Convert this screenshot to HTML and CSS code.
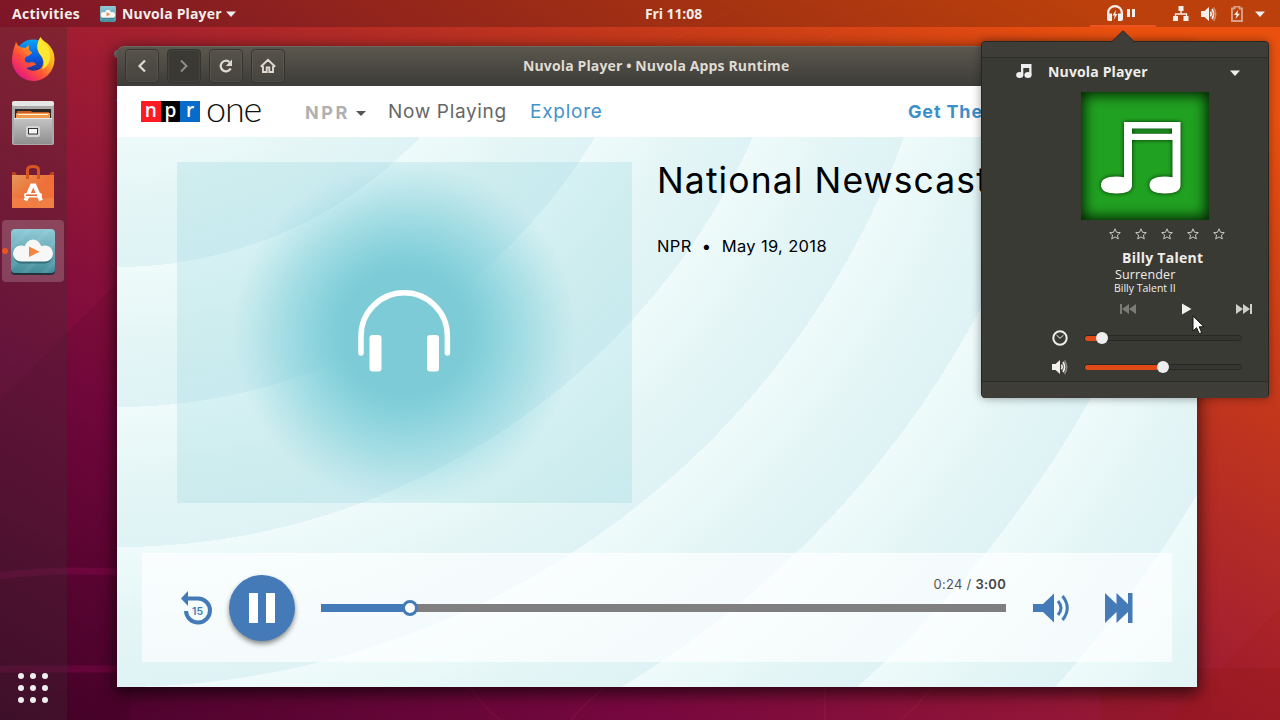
FILE: index.html
```html
<!DOCTYPE html>
<html lang="en">
<head>
<meta charset="utf-8">
<title>Nuvola Player</title>
<link rel="stylesheet" href="styles.css">
</head>
<body>
<div class="desktop">
  <svg class="wallpaper" width="1280" height="720" viewBox="0 0 1280 720">
    <path d="M0 400 130 270V720H0z" fill="#000" opacity=".06"/>
    <path d="M0 576Q66 566 180 576" fill="none" stroke="#c0106c" stroke-width="7" opacity=".2"/>
    <path d="M0 669H180" stroke="#c0106c" stroke-width="7" opacity=".2"/>
    <path d="M1100 668H1280V720H1100z" fill="#8a1000" opacity=".16"/>
    <path d="M1280 608 1168 720H1280z" fill="#a01000" opacity=".1"/>
    <g fill="none" stroke="#ff5a50" opacity=".08" stroke-width="2">
      <path d="M470 687q12 18 30 33M605 687q-22 18-34 33M825 687v33M932 687q-14 20-40 40M780 46Q840 8 910 0M660 46Q720 18 750 0M815 46Q860 8 1000 34"/>
    </g>
  </svg>

  <header class="topbar">
    <span class="activities">Activities</span>
    <svg class="app-icon" width="16" height="16" viewBox="0 0 44 44"><use href="#nuvola"/></svg>
    <span class="app-name">Nuvola Player</span>
    <svg class="app-caret" width="10" height="6"><path d="M0 .5h10L5 6z" fill="#eee"/></svg>
    <span class="clock">Fri 11:08</span>
    <div class="indicator">
      <svg width="30" height="18" viewBox="0 0 30 18" fill="#f3efec">
        <path d="M1.200 9.500V7.500a6.700 6.200 0 0 1 13.600 0v2" fill="none" stroke="#f3efec" stroke-width="2.200"/>
        <path d="M0 8.500h5V16H2q-2 0-2-2zM16 8.500h-5V16h3q2 0 2-2z"/>
        <path d="M9 5 5.500 10.500h2.300L6.500 15l4-6H8.300z"/>
        <path d="M20 4h3v8h-3zM25 4h3v8h-3z"/>
      </svg>
    </div>
    <svg class="net" width="16" height="16" viewBox="0 0 16 16" fill="#f3efec"><path d="M5.500 0h5v5h-5zM0 10h5v5H0zM10.500 10h5v5h-5z"/><path d="M8 5v3M2.500 11V8h11v3" fill="none" stroke="#f3efec" stroke-width="1.300"/></svg>
    <svg class="vol" width="16" height="16" viewBox="0 0 16 16"><use href="#speaker"/></svg>
    <svg class="bat" width="12" height="16" viewBox="0 0 12 16"><path d="M1 2.500h2.500v-2h5v2H11v12.500H1z" fill="none" stroke="#fff" stroke-opacity=".5" stroke-width="1.900"/><path d="M7 4 3 9h2.600L4.500 13l4.500-5.200H6.500z" fill="#f3efec"/></svg>
    <svg class="sys-caret" width="10" height="6"><path d="M0 .5h10L5 6z" fill="#eee"/></svg>
  </header>

  <nav class="dock">
    <div class="dock-item">
      <svg width="44" height="46" viewBox="0 0 44 46">
        <defs>
          <linearGradient id="fx" x1=".9" y1="0" x2=".1" y2=".9"><stop offset="0" stop-color="#ffe226"/><stop offset=".35" stop-color="#ffb01e"/><stop offset=".65" stop-color="#ff5038"/><stop offset="1" stop-color="#e0128c"/></linearGradient>
          <linearGradient id="fxb" x1="0" y1="0" x2="0" y2="1"><stop offset="0" stop-color="#08a5f4"/><stop offset=".5" stop-color="#0b5ae0"/><stop offset="1" stop-color="#2b2277"/></linearGradient>
        </defs>
        <circle cx="22" cy="21.500" r="18" fill="url(#fxb)"/>
        <path d="M5 6Q2 13 1 22A21.500 21.500 0 0 0 22 45 21.500 21.500 0 0 0 43.500 24Q44 14 36 7 30 3 29.500 1 24 10 28 17 36 27 29 33 21 37 15 32 20 31 25 28.500 24 26 20 26 16 28 14 25 13 21 17 20 21 18 21 16 17 15 18 9L14 12 9 11Q6 9 5 6z" fill="url(#fx)"/>
        <path d="M29.500 1Q24 9 28 17 36 25 31 33 37 31 39 23 40 14 35 8 31 5 29.500 1z" fill="#ffe630"/>
      </svg>
    </div>
    <div class="dock-item">
      <svg width="44" height="46" viewBox="0 0 44 46">
        <defs><linearGradient id="cab" x1="0" y1="0" x2="0" y2="1"><stop offset="0" stop-color="#c4c4c4"/><stop offset="1" stop-color="#8f8f8f"/></linearGradient></defs>
        <rect x="1" y="2" width="42" height="43" rx="2" fill="#aaa"/>
        <rect x="1" y="1" width="42" height="5" rx="2" fill="#e6e6e6"/>
        <path d="M4 9h36v9H4z" fill="#292522"/>
        <path d="M6 11h14l1 1h17v6H6z" fill="#c75c28"/><path d="M5 13h34v5H5z" fill="#f29a4c"/><path d="M7 14.500h30" stroke="#fff1dc"/>
        <path d="M3 18h38v26H3z" fill="url(#cab)"/><path d="M3 18.500h38" stroke="#e9e9e9"/>
        <rect x="15" y="26" width="14" height="11" rx="2" fill="#d5d5d5"/><rect x="17.500" y="28.500" width="9" height="5.500" fill="#f5f5f5" stroke="#333"/>
      </svg>
    </div>
    <div class="dock-item">
      <svg width="44" height="46" viewBox="0 0 44 46">
        <defs><linearGradient id="bag" x1="0" y1="0" x2="1" y2="1"><stop offset="0" stop-color="#e6975a"/><stop offset=".5" stop-color="#ee7038"/><stop offset="1" stop-color="#ee7339"/></linearGradient></defs>
        <path d="M1 8h3l2 3h32l2-3h3v6H1z" fill="#b9431b"/>
        <path d="M1 11h42v33H1z" fill="url(#bag)"/><path d="M1 34h42v10H1z" fill="#f48950" opacity=".5"/>
        <path d="M16.500 15V6q0-3.500 5.500-3.500T27.500 6v9" fill="none" stroke="#d7551f" stroke-width="3"/>
        <path d="M14.500 36.500 21 21.500h2.500L30 36.500" fill="none" stroke="#fff" stroke-width="4"/>
        <rect x="13" y="29" width="18" height="4.500" rx="2" fill="#fff"/><path d="M15 31.200h11" stroke="#e96325" stroke-width="1.500"/>
      </svg>
    </div>
    <div class="dock-item dock-active">
      <svg width="44" height="47" viewBox="0 -1 44 47">
        <defs>
          <linearGradient id="nv" x1="0" y1="0" x2="0" y2="1"><stop offset="0" stop-color="#8fcad5"/><stop offset="1" stop-color="#438c9a"/></linearGradient>
          <g id="nuvola">
            <rect x="0" y="2" width="44" height="44" rx="4" fill="#22333c"/>
            <rect x="0" y="0" width="44" height="44" rx="4" fill="url(#nv)"/>
            <path d="M0 16 16 0h6L0 22zM0 35 35 0h6L0 41zM10 44 44 10v6L16 44zM30 44l14-14v6l-8 8z" fill="#fff" opacity=".07"/>
            <path d="M10 34.500a8 8 0 0 1 1-16q3 0 4 1a8.500 8.500 0 0 1 14 0q2-1 4-1a8 8 0 0 1 1 16z" fill="#255966" opacity=".7"/>
            <path d="M10 32.500a8 8 0 0 1 0-16q2 0 4 .5a8.200 8.200 0 0 1 16 0q2-.5 4-.5a8 8 0 0 1 0 16z" fill="#f7f7f7"/>
            <path d="M18 17.500 28.500 22.700 18 28z" fill="#f08643"/>
          </g>
          <g id="speaker"><path d="M0 5h3.500L8 1v14L3.500 11H0z" fill="#f3efec"/><path d="M9.500 5.500q1.500 2.500 0 5M11 3q3.200 5 0 10" fill="none" stroke="#f3efec" stroke-width="1.700"/><path d="M12.500 1.500Q17 8 12.500 15" fill="none" stroke="#fff" stroke-width="1.500" opacity=".4"/></g>
        </defs>
        <use href="#nuvola"/>
      </svg>
      <i class="running"></i>
    </div>
    <svg class="apps" width="30" height="30" viewBox="0 0 30 30" fill="#eee"><circle cx="3" cy="3" r="3"/><circle cx="15" cy="3" r="3"/><circle cx="27" cy="3" r="3"/><circle cx="3" cy="15" r="3"/><circle cx="15" cy="15" r="3"/><circle cx="27" cy="15" r="3"/><circle cx="3" cy="27" r="3"/><circle cx="15" cy="27" r="3"/><circle cx="27" cy="27" r="3"/></svg>
  </nav>

  <i class="desk-icon"></i><i class="desk-label"></i>

  <main class="window">
    <div class="titlebar">
      <span class="tb-btn"><svg width="16" height="16"><path d="M11 2.500 5.500 8l5.500 5.500" fill="none" stroke="#dfdbd2" stroke-width="2.200"/></svg></span>
      <span class="tb-btn tb-off"><svg width="16" height="16"><path d="M5 2.500 10.500 8 5 13.500" fill="none" stroke="#8f8d86" stroke-width="2"/></svg></span>
      <span class="tb-btn"><svg width="16" height="16"><path d="M12.700 10.500A5.300 5.300 0 1 1 11.500 4" fill="none" stroke="#dfdbd2" stroke-width="2.200"/><path d="M14 1.500V8H7.800z" fill="#dfdbd2"/></svg></span>
      <span class="tb-btn"><svg width="16" height="16"><path d="M.8 8.800 8 1.800l7.200 7M3 8v6h3.700V9.500h2.600V14H13V8" fill="none" stroke="#dfdbd2" stroke-width="1.900"/></svg></span>
      <span class="win-title">Nuvola Player • Nuvola Apps Runtime</span>
    </div>
    <div class="nav">
      <div class="logo"><b class="n">n</b><b class="p">p</b><b class="r">r</b></div>
      <span class="one">one</span>
      <span class="npr">NPR</span>
      <svg class="nav-caret" width="10" height="5"><path d="M0 0h10L5 5z" fill="#555"/></svg>
      <span class="playing">Now Playing</span>
      <span class="explore">Explore</span>
      <span class="get">Get The App</span>
    </div>
    <div class="stage">
      <div class="episode">
        <div class="art">
          <svg width="94" height="84" viewBox="0 0 94 84"><path d="M4 63V46a43.200 43.200 0 0 1 86.400 0V63" fill="none" stroke="#fff" stroke-width="5.500" stroke-linecap="round"/><rect x="12.500" y="45" width="12" height="36.500" rx="3" fill="#fff"/><rect x="70" y="45" width="12" height="36.500" rx="3" fill="#fff"/></svg>
        </div>
        <div class="info">
          <h1>National Newscast</h1>
          <p><span>NPR</span><span class="dot">•</span><span>May 19, 2018</span></p>
        </div>
      </div>
      <div class="player">
        <svg class="rewind" width="34" height="36" viewBox="0 0 34 36"><path d="M7.500 8.500H18a12 12 0 1 1-12 12.500" fill="none" stroke="#457ab8" stroke-width="4"/><path d="M1 8.500 8 1v15z" fill="#457ab8"/><text x="17.500" y="24.500" text-anchor="middle" class="fifteen">15</text></svg>
        <span class="pause"><i></i><i></i></span>
        <div class="timeline">
          <div class="time">0:24 / <b>3:00</b></div>
          <div class="track"><i class="played"></i><i class="knob"></i></div>
        </div>
        <svg class="volume" width="38" height="30" viewBox="0 0 38 30"><path d="M0 11h10L21 .5v29L10 19H0z" fill="#457ab8"/><path d="M25 8q6 7 0 14M29.500 3q9.500 12 0 24" fill="none" stroke="#457ab8" stroke-width="3"/></svg>
        <svg class="skip" width="28" height="30" viewBox="0 0 28 30"><path d="M0 0 11.500 11V0L23 11V0h4.500v30H23V19L11.500 30V19L0 30z" fill="#457ab8"/></svg>
      </div>
    </div>
  </main>

  <aside class="popup">
    <svg class="arrow" width="26" height="13"><path d="M1 12.500 13 .7 25 12.500" fill="#3e3d38" stroke="#272722"/></svg>
    <div class="band"></div>
    <div class="player-row">
      <svg width="16" height="16" viewBox="0 0 16 16" fill="#eee"><path d="M5 0h10.500v11h-2.300V4H7.300v7H5z"/><ellipse cx="3.700" cy="11" rx="3.600" ry="3"/><ellipse cx="12" cy="11" rx="3.600" ry="3"/></svg>
      <span>Nuvola Player</span>
      <svg class="row-caret" width="10" height="6"><path d="M0 .5h10L5 6z" fill="#eee"/></svg>
    </div>
    <div class="cover">
      <svg width="128" height="128" viewBox="0 0 128 128"><path d="M43 30h56.500v63q0 8.500-15.500 8.500t-15.500-8.500 15.500-8.500q4 0 7.500.7V48H51v45q0 8.500-15.500 8.500T20 93t15.500-8.500q4 0 7.500.7zM51 36.500v5.300h40v-5.300z" fill="#fff" fill-rule="evenodd"/></svg>
    </div>
    <div class="stars">
      <svg width="12" height="12" viewBox="0 0 12 12"><path id="star" d="M6 .8l1.500 3.500 3.800.3-2.900 2.500.9 3.800L6 8.900l-3.300 2 .9-3.800L.7 4.600l3.800-.3z" fill="none" stroke="#c9c8c2"/></svg>
      <svg width="12" height="12"><use href="#star"/></svg>
      <svg width="12" height="12"><use href="#star"/></svg>
      <svg width="12" height="12"><use href="#star"/></svg>
      <svg width="12" height="12"><use href="#star"/></svg>
    </div>
    <div class="artist">Billy Talent</div>
    <div class="song">Surrender</div>
    <div class="album">Billy Talent II</div>
    <div class="controls">
      <svg width="16" height="10" fill="#7b7b77"><path d="M0 0h2v10H0zM9 0v10L2 5zM16 0v10L9 5z"/></svg>
      <svg class="play" width="10" height="12" fill="#f1f1ee"><path d="M0 .5 9.500 6 0 11.500z"/></svg>
      <svg width="16" height="10" fill="#cfcfca"><path d="M14 0h2v10h-2zM0 0v10l7-5zM7 0v10l7-5z"/></svg>
    </div>
    <div class="slider-row">
      <svg width="16" height="16" viewBox="0 0 16 16"><circle cx="8" cy="8" r="6.700" fill="none" stroke="#eee" stroke-width="2"/><path d="M4.500 5 8 8.300l3.500-3" fill="none" stroke="#eee"/></svg>
      <div class="slider"><i style="width:17px"></i><b></b></div>
    </div>
    <div class="slider-row">
      <svg width="16" height="16" viewBox="0 0 16 16"><use href="#speaker"/></svg>
      <div class="slider"><i style="width:78px"></i><b></b></div>
    </div>
    <div class="foot"></div>
  </aside>

  <svg class="cursor" width="14" height="20" viewBox="0 0 14 20"><path d="M1 1v15l3.600-3.300 2.600 6 2.500-1.100-2.500-5.800H12z" fill="#fff" stroke="#111"/></svg>
</div>
</body>
</html>
```

FILE: styles.css
```css
* { box-sizing: border-box; }
body { margin: 0; overflow: hidden; }
svg { display: block; flex: none; }
.desktop {
  position: relative; width: 1280px; height: 720px; overflow: hidden;
  font-family: "Open Sans", "Noto Sans", sans-serif; color: #f0ede9;
  background: linear-gradient(to top right, #440229, #78083f 26%, #a01d32 50%, #cb3d17 76%, #ea510f 92%);
}
.wallpaper { position: absolute; inset: 0; }

.topbar {
  position: relative; display: flex; align-items: center; height: 27px; padding-left: 12px;
  background: rgba(0,0,0,.2); font-weight: 700; font-size: 14px; white-space: nowrap;
}
.activities { width: 88px; letter-spacing: .3px; }
.app-icon { margin-right: 6px; }
.app-name { width: 98px; letter-spacing: .15px; }
.app-caret { margin-left: 6px; }
.clock { margin-left: 409px; width: 60px; font-size: 14px; letter-spacing: -.1px; margin-top: -1px; }
.indicator { width: 66px; height: 27px; margin-left: 385px; padding: 5px 0 0 17px; border-bottom: 2px solid #ee5323; }
.net { margin-left: 17px; }
.vol { margin-left: 12px; }
.bat { margin-left: 14px; }
.sys-caret { margin-left: 12px; }
.app-name, .app-caret, .clock { flex: none; }

.dock {
  position: relative; display: flex; flex-direction: column; gap: 2px; width: 67px; height: 693px;
  padding: 1px 0 0 2px; background: rgba(60,50,50,.3);
}
.dock-item { position: relative; width: 62px; height: 62px; padding: 8px 9px; border-radius: 4px; }
.dock-active { background: rgba(255,255,255,.19); }
.running { position: absolute; left: 0; top: 28px; width: 6px; height: 6px; border-radius: 50%; background: #e95420; }
.apps { margin: auto 0 17px 16px; }
.desk-icon { position: absolute; left: 114px; top: 50px; width: 8px; height: 8px; border-radius: 50%; background: #777; }
.desk-label { position: absolute; left: 116px; top: 100px; width: 2px; height: 1px; background: #4a78b8; }

.window {
  position: absolute; left: 117px; top: 46px; width: 1080px; height: 641px; border-radius: 7px 7px 0 0;
  box-shadow: 0 5px 16px 2px rgba(0,0,0,.65); color: #000; font-family: Inter, sans-serif;
}
.titlebar {
  display: flex; align-items: center; gap: 8px; height: 40px; padding: 0 8px 1px; border-radius: 7px 7px 0 0;
  background: linear-gradient(#5b574e, #3d3c38); border-top: 1px solid #6c685f; color: #dfdbd2;
}
.tb-btn {
  display: flex; align-items: center; justify-content: center; width: 34px; height: 34px; border: 1px solid #35342f; border-radius: 4px;
  background: linear-gradient(#56524a, #45443e); box-shadow: inset 0 0 0 1px rgba(255,255,255,.05);
}
.tb-off { background: #3a3934; }
.win-title { margin: -2px 0 0 230px; font: 700 14px "Open Sans", sans-serif; letter-spacing: .13px; white-space: nowrap; }
.nav { display: flex; align-items: center; height: 51px; padding-left: 24px; background: #fff; font-size: 19px; white-space: nowrap; }
.logo { display: flex; width: 59px; height: 21px; }
.logo b { flex: 1; color: #fff; font: 600 19px/18px "Open Sans", sans-serif; text-align: center; }
.n { background: #fd1c24; } .p { background: #000; } .r { background: #066bc9; }
.one { width: 105px; padding-left: 6px; font: 300 36px/36px Lato, sans-serif; letter-spacing: -1.200px; color: #111; margin-top: -8px; }
.npr { width: 51px; font-weight: 700; letter-spacing: 2.600px; font-size: 18px; color: #b0b0b0; padding-top: 2px; }
.nav-caret { margin: 4px 22px 0 0; }
.playing { width: 142px; color: #666; letter-spacing: .65px; }
.explore { width: 378px; color: #4493c9; letter-spacing: .75px; }
.get { width: 150px; color: #3d8fc9; font-weight: 700; font-size: 18px; letter-spacing: .85px; }
.stage {
  height: 550px; padding: 25px; display: flex; flex-direction: column; justify-content: space-between;
  background: repeating-radial-gradient(circle at 0 -288px, #effbfb -2px, #e4f5f5 75px, #dff3f6 138px);
}
.episode { display: flex; padding-left: 35px; gap: 25px; }
.art {
  width: 455px; height: 341px; display: flex; align-items: center; justify-content: center;
  background: radial-gradient(circle at 50% 50%, #7ccbd7 62px, rgba(124,205,216,.9) 78px, rgba(124,206,218,.5) 120px, rgba(124,206,217,.17) 152px, rgba(124,206,217,0) 171px), rgba(124,203,215,.22);
}
.art svg { margin: -1px 0 0 -1px; }
.info h1 { margin: -2px 0 0; font-weight: 400; font-size: 35.500px; line-height: 42px; letter-spacing: 1.100px; white-space: nowrap; }
.info p { margin: 34px 0 0; display: flex; font-size: 16.500px; line-height: 20px; letter-spacing: .35px; }
.dot { width: 30px; text-align: center; }
.player {
  display: flex; align-items: center; height: 109px; padding-left: 38px;
  background: rgba(255,255,255,.66); border-top: 1px solid rgba(255,255,255,.5);
}
.rewind { margin-right: 15px; }
.fifteen { font: 600 10.500px Inter, sans-serif; fill: #457ab8; }
.pause { display: flex; align-items: center; justify-content: center; gap: 8px; width: 66px; height: 66px; border-radius: 50%; background: #457ab8; box-shadow: 0 3px 5px rgba(0,0,0,.45); }
.pause i { width: 9px; height: 30px; background: #fff; }
.timeline { width: 685px; height: 109px; margin-left: 26px; padding-top: 21px; }
.time { height: 18px; line-height: 18px; text-align: right; font-size: 13px; letter-spacing: .25px; color: #555; }
.time b { font-weight: 600; color: #444; }
.track { position: relative; height: 8px; margin-top: 11px; background: #7f7f7f; }
.played { display: block; width: 89px; height: 8px; background: #457ab8; }
.knob { position: absolute; left: 81px; top: -4px; width: 16px; height: 16px; border: 3px solid #457ab8; border-radius: 50%; background: #fff; }
.volume { margin-left: 27px; }
.skip { margin-left: 34px; }

.popup {
  position: absolute; left: 981px; top: 41px; width: 288px; height: 357px; background: #3a3a35;
  border: 1px solid #272722; border-radius: 4px; box-shadow: 0 0 10px rgba(0,0,0,.4); white-space: nowrap;
}
.arrow { position: absolute; left: 128px; top: -12px; }
.band { height: 16px; background: #3e3d38; border-bottom: 1px solid #2c2c28; border-radius: 3px 3px 0 0; }
.player-row { display: flex; align-items: center; height: 28px; padding: 0 0 1px 34px; font-weight: 700; font-size: 14px; letter-spacing: .15px; }
.player-row span { width: 183px; margin-left: 16px; }
.row-caret { margin: 2px 0 0 -1px; }
.cover { width: 128px; height: 128px; margin: 6px 0 0 99px; background: #21a121; box-shadow: inset 0 0 13px 3px #042004; }
.cover svg { filter: drop-shadow(0 0 2px #032e03); }
.stars { display: flex; gap: 14px; height: 28px; align-items: center; padding-left: 127px; }
.artist { margin-left: 140px; font-weight: 700; font-size: 14px; line-height: 19px; letter-spacing: .25px; }
.song { margin-left: 133px; font-size: 12.500px; line-height: 15px; letter-spacing: .15px; }
.album { margin-left: 132px; font-size: 10.500px; line-height: 12px; }
.controls { display: flex; align-items: center; justify-content: space-between; height: 29px; padding: 0 16px 0 138px; }
.play { margin-left: 2px; }
.slider-row { display: flex; align-items: center; gap: 16px; height: 29px; padding: 1px 0 0 70px; }
.slider-row svg { margin: -1px 0 0; }
.slider { display: flex; align-items: center; width: 158px; height: 6px; border: 1px solid #282824; border-radius: 3px; background: #353531; }
.slider i { height: 5px; background: #df4a16; border-radius: 3px; }
.slider b { width: 12px; height: 12px; margin-left: -6px; border-radius: 50%; background: #eee; flex: none; }
.foot { height: 17px; background: #3e3d38; border-top: 1px solid #2b2b27; border-radius: 0 0 3px 3px; }
.cursor { position: absolute; left: 1192px; top: 315px; }
```
